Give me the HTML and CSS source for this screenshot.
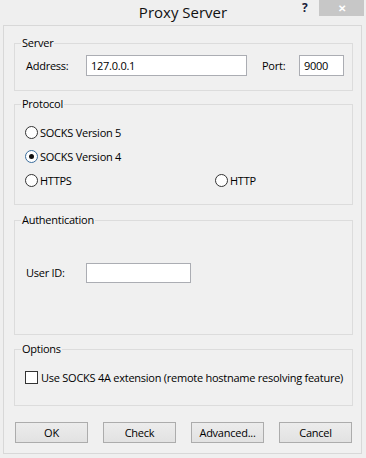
FILE: index.html
```html
<!DOCTYPE html>
<html>
<head>
  <meta charset="UTF-8">
  <title>Proxy Server</title>
  <link rel="stylesheet" href="styles.css">
</head>
<body>
  <div class="window">
    <div class="titlebar">
      <span class="title">Proxy Server</span>
      <span class="help">?</span>
      <span class="close">&#x2715;</span>
    </div>
    <div class="client">
      <div class="group server">
        <div class="group-title">Server</div>
        <div class="row">
          <span class="label addr-label">Address:</span>
          <span class="input addr">127.0.0.1</span>
          <span class="label port-label">Port:</span>
          <span class="input port">9000</span>
        </div>
      </div>

      <div class="group protocol">
        <div class="group-title">Protocol</div>
        <div class="radios">
          <label class="radio"><span class="dot"></span>SOCKS Version 5</label>
          <span></span>
          <label class="radio"><span class="dot checked"></span>SOCKS Version 4</label>
          <span></span>
          <label class="radio"><span class="dot"></span>HTTPS</label>
          <label class="radio"><span class="dot"></span>HTTP</label>
        </div>
      </div>

      <div class="group auth">
        <div class="group-title">Authentication</div>
        <div class="row user-row">
          <span class="label addr-label">User ID:</span>
          <span class="input user"></span>
        </div>
      </div>

      <div class="group options">
        <div class="group-title">Options</div>
        <label class="check-row"><span class="box"></span>Use SOCKS 4A extension (remote hostname resolving feature)</label>
      </div>

      <div class="buttons">
        <button class="btn">OK</button>
        <button class="btn">Check</button>
        <button class="btn">Advanced...</button>
        <button class="btn">Cancel</button>
      </div>
    </div>
  </div>
</body>
</html>
```

FILE: styles.css
```css
body {
  margin: 0;
  background: #efefef;
  font-family: "Open Sans", "Noto Sans", sans-serif;
  font-size: 11px;
  letter-spacing: -0.25px;
  color: #000;
}

.window {
  width: 366px;
  height: 458px;
  background: #efefef;
}

.titlebar {
  height: 25px;
  display: flex;
  align-items: flex-start;
  position: relative;
}
.title {
  flex: 1;
  text-align: center;
  font-size: 15px;
  letter-spacing: 0;
  line-height: 24px;
  color: #111;
}
.help {
  position: absolute;
  left: 302px;
  top: 1px;
  font-weight: bold;
  font-size: 12px;
  line-height: 14px;
  color: #1b1b3a;
}
.close {
  position: absolute;
  left: 319px;
  top: 0;
  width: 45px;
  height: 16px;
  background: #c7c7c7;
  color: #fff;
  font-size: 10px;
  font-weight: bold;
  line-height: 16px;
  text-align: center;
}

.client {
  margin: 0 4px 0 3px;
  height: 429px;
  box-sizing: border-box;
  border: 1px solid #d8d8d8;
  background: #f0f0f0;
  padding: 0 8px 0 10px;
  overflow: hidden;
}

.group {
  border: 1px solid #dcdcdc;
  box-sizing: border-box;
}
.group-title {
  margin: -8px 0 0 6px;
  padding: 0 1px;
  width: max-content;
  line-height: 14px;
  background: #f0f0f0;
}

.server {
  margin-top: 17px;
  height: 48px;
}
.protocol {
  margin-top: 13px;
  height: 101px;
}
.auth {
  margin-top: 15px;
  height: 115px;
}
.options {
  margin-top: 14px;
  height: 57px;
}

.row {
  display: flex;
  align-items: center;
  height: 21px;
  margin-top: 5px;
  padding-left: 11px;
}
.label {
  line-height: 21px;
}
.addr-label {
  width: 60px;
}
.port-label {
  margin-left: 15px;
  width: 37px;
}
.input {
  box-sizing: border-box;
  height: 21px;
  background: #fff;
  border: 1px solid #abadb3;
  padding: 0 4px;
  line-height: 19px;
}
.addr {
  width: 161px;
}
.port {
  width: 45px;
}
.user-row {
  margin-top: 35px;
}
.user {
  width: 105px;
  height: 20px;
}

.radios {
  display: grid;
  grid-template-columns: 190px 1fr;
  grid-auto-rows: 24px;
  margin-top: 9px;
  padding-left: 10px;
}
.radio {
  display: flex;
  align-items: center;
}
.dot {
  flex-shrink: 0;
  width: 13px;
  height: 13px;
  box-sizing: border-box;
  border: 1px solid #333;
  border-radius: 50%;
  background: #fff;
  margin-right: 2px;
  display: flex;
  align-items: center;
  justify-content: center;
}
.dot.checked {
  border-color: #3a6d9c;
}
.dot.checked::after {
  content: "";
  width: 5px;
  height: 5px;
  border-radius: 50%;
  background: #111;
}

.check-row {
  display: flex;
  align-items: center;
  height: 20px;
  margin-top: 11px;
  padding-left: 10px;
  white-space: nowrap;
}
.box {
  flex-shrink: 0;
  width: 13px;
  height: 13px;
  box-sizing: border-box;
  border: 1px solid #333;
  background: #fff;
  margin-right: 3px;
}

.buttons {
  display: flex;
  gap: 15px;
  margin: 16px 0 0 1px;
}
.btn {
  width: 73px;
  height: 21px;
  padding: 0;
  border: 1px solid #acacac;
  background: linear-gradient(#ececec, #e2e2e2);
  font-family: inherit;
  font-size: 11px;
  letter-spacing: -0.25px;
  color: #000;
}
```
